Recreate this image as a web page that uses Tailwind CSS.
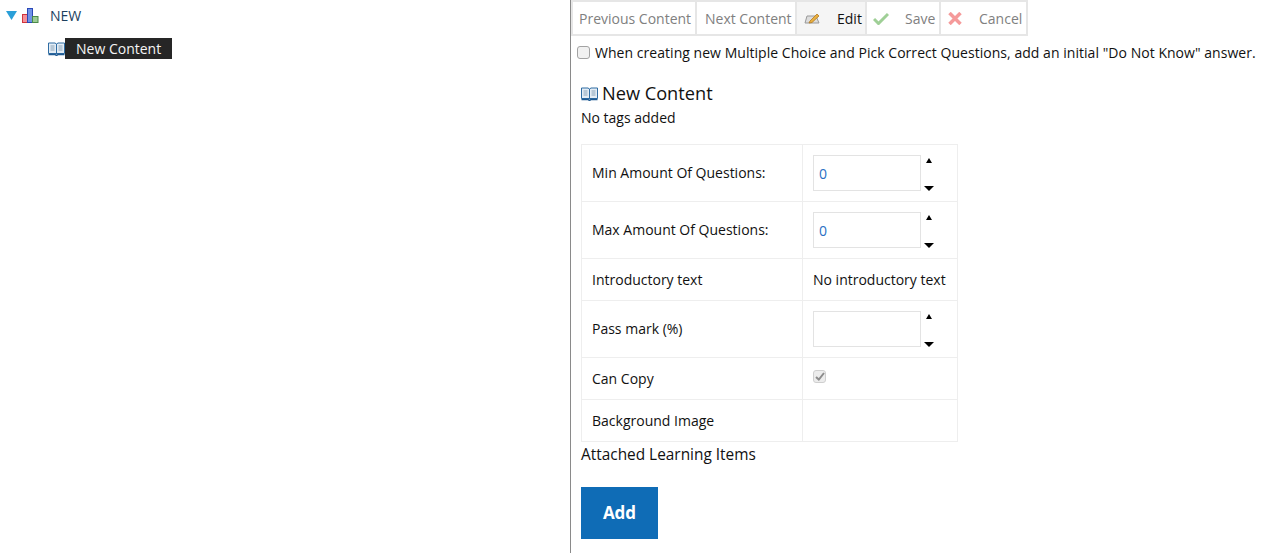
<!DOCTYPE html>
<html lang="en">
<head>
<meta charset="UTF-8">
<title>New Content</title>
<script src="https://cdn.jsdelivr.net/npm/@tailwindcss/browser@4"></script>
</head>
<body class="bg-white">
<div class="flex h-[553px] w-[1276px] overflow-hidden font-['Open_Sans',sans-serif] text-[14px] text-[#111]">

  <!-- tree -->
  <div class="w-[570px] shrink-0">
    <div class="flex h-[31px] items-center pl-[6px]">
      <svg width="11" height="9" viewBox="0 0 11 9" class="mb-[1px]"><path d="M0 0H11L5.500 9Z" fill="#2a9fd8"/></svg>
      <svg width="17" height="15" viewBox="0 0 17 15" class="ml-[5px]">
        <rect x="0.500" y="6.500" width="5" height="8" fill="#f58f98" stroke="#d0343c"/>
        <rect x="5.500" y="0.500" width="5" height="14" fill="#6f92e6" stroke="#2a48b8"/>
        <rect x="10.500" y="8.500" width="5.500" height="6" fill="#9ccb94" stroke="#4a8a48"/>
      </svg>
      <span class="ml-[11px] text-[#1d3f5e]">NEW</span>
    </div>
    <div class="mt-[7px] flex h-[21px] items-center pl-[48px]">
      <svg width="17" height="14" viewBox="0 0 17 14">
        <path d="M0.500 1H7L8.500 2L10 1H16.500V11.500H0.500Z" fill="#e4edf5" stroke="#2f6ca3"/>
        <path d="M0.500 12.500H7L8.500 13.500L10 12.500H16.500" fill="none" stroke="#1f5a92" stroke-width="1.500"/>
        <path d="M8.500 2V12" stroke="#2f6ca3"/>
        <path d="M2.500 4H6.500M2.500 6H6.500M2.500 8H6.500M10.500 4H14.500M10.500 6H14.500M10.500 8H14.500" stroke="#8aa3b8"/>
      </svg>
      <span class="flex h-[21px] w-[107px] items-center bg-[#262626] pl-[11px] text-[#f5f5f5]">New Content</span>
    </div>
  </div>

  <!-- detail -->
  <div class="flex-1 border-l border-[#8a8a8a]">
    <div class="flex h-[36px] text-[#808080]">
      <div class="flex w-[126px] items-center border-2 border-[#e6e6e6] pl-[6px] whitespace-nowrap">Previous Content</div>
      <div class="flex w-[100px] items-center border-y-2 border-r-2 border-[#e6e6e6] pl-[8px] whitespace-nowrap">Next Content</div>
      <div class="flex w-[70px] items-center border-y-2 border-r-2 border-[#e6e6e6] bg-[#f5f5f5] pl-[7px] text-[#111]">
        <svg width="17" height="13" viewBox="0 0 17 13"><path d="M1 11L3 4H12L15 11Z" fill="#ddd" stroke="#999"/><path d="M6 9L13 2L15 4L8 10.500L5 11Z" fill="#e8b040" stroke="#b57a20" stroke-width="0.800"/></svg>
        <span class="ml-[16px]">Edit</span>
      </div>
      <div class="flex w-[74px] items-center border-y-2 border-r-2 border-[#e6e6e6] pl-[6px]">
        <svg width="16" height="13" viewBox="0 0 16 13"><path d="M1 7L5.500 11.500L15 2" fill="none" stroke="#9fcf96" stroke-width="3"/></svg>
        <span class="ml-[16px]">Save</span>
      </div>
      <div class="flex w-[87px] items-center border-y-2 border-r-2 border-[#e6e6e6] pl-[7px]">
        <svg width="14" height="13" viewBox="0 0 14 13"><path d="M1.500 1L12.500 12M12.500 1L1.500 12" fill="none" stroke="#f59a9a" stroke-width="3.500"/></svg>
        <span class="ml-[17px]">Cancel</span>
      </div>
    </div>

    <label class="mt-[8px] flex h-[16px] items-center pl-[6px]">
      <input type="checkbox" class="h-[13px] w-[13px] appearance-none rounded-[3px] border border-[#a3a3a3] bg-[#f1f1f1]">
      <span class="ml-[5px] whitespace-nowrap tracking-[0.04px]">When creating new Multiple Choice and Pick Correct Questions, add an initial "Do Not Know" answer.</span>
    </label>

    <div class="ml-[10px]">
      <div class="mt-[21px] flex h-[26px] items-center">
        <svg width="17" height="14" viewBox="0 0 17 14">
          <path d="M0.500 1H7L8.500 2L10 1H16.500V11.500H0.500Z" fill="#e4edf5" stroke="#2f6ca3"/>
          <path d="M0.500 12.500H7L8.500 13.500L10 12.500H16.500" fill="none" stroke="#1f5a92" stroke-width="1.500"/>
          <path d="M8.500 2V12" stroke="#2f6ca3"/>
          <path d="M2.500 4H6.500M2.500 6H6.500M2.500 8H6.500M10.500 4H14.500M10.500 6H14.500M10.500 8H14.500" stroke="#8aa3b8"/>
        </svg>
        <span class="ml-[4px] text-[18.2px]">New Content</span>
      </div>
      <div class="mt-[1px] h-[20px] leading-[20px]">No tags added</div>

      <table class="mt-[16px] w-[377px] table-fixed border-collapse">
        <tbody>
          <tr class="h-[57px]">
            <td class="w-[221px] border border-[#eeeeee] pb-[2px] pl-[10px]">Min Amount Of Questions:</td>
            <td class="border border-[#eeeeee] pl-[10px]">
              <div class="flex items-start">
                <div class="flex h-[36px] w-[108px] items-center border border-[#e3e3e3] pt-[1px] pl-[5px] text-[#2a6fc4]">0</div>
                <div class="flex h-[36px] w-[16px] flex-col items-center justify-between pt-[3px] pb-0">
                  <span class="h-0 w-0 border-x-[3.5px] border-b-[5px] border-x-transparent border-b-black"></span>
                  <span class="h-0 w-0 border-x-[5px] border-t-[5px] border-x-transparent border-t-black"></span>
                </div>
              </div>
            </td>
          </tr>
          <tr class="h-[57px]">
            <td class="border border-[#eeeeee] pb-[2px] pl-[10px]">Max Amount Of Questions:</td>
            <td class="border border-[#eeeeee] pl-[10px]">
              <div class="flex items-start">
                <div class="flex h-[36px] w-[108px] items-center border border-[#e3e3e3] pt-[1px] pl-[5px] text-[#2a6fc4]">0</div>
                <div class="flex h-[36px] w-[16px] flex-col items-center justify-between pt-[3px] pb-0">
                  <span class="h-0 w-0 border-x-[3.5px] border-b-[5px] border-x-transparent border-b-black"></span>
                  <span class="h-0 w-0 border-x-[5px] border-t-[5px] border-x-transparent border-t-black"></span>
                </div>
              </div>
            </td>
          </tr>
          <tr class="h-[42px]">
            <td class="border border-[#eeeeee] pl-[10px]">Introductory text</td>
            <td class="whitespace-nowrap border border-[#eeeeee] pl-[10px]">No introductory text</td>
          </tr>
          <tr class="h-[57px]">
            <td class="border border-[#eeeeee] pb-[2px] pl-[10px]">Pass mark (%)</td>
            <td class="border border-[#eeeeee] pl-[10px]">
              <div class="flex items-start">
                <div class="h-[36px] w-[108px] border border-[#e3e3e3]"></div>
                <div class="flex h-[36px] w-[16px] flex-col items-center justify-between pt-[3px] pb-0">
                  <span class="h-0 w-0 border-x-[3.5px] border-b-[5px] border-x-transparent border-b-black"></span>
                  <span class="h-0 w-0 border-x-[5px] border-t-[5px] border-x-transparent border-t-black"></span>
                </div>
              </div>
            </td>
          </tr>
          <tr class="h-[42px]">
            <td class="border border-[#eeeeee] pl-[10px]">Can Copy</td>
            <td class="border border-[#eeeeee] pl-[10px]">
              <div class="mb-[5px] flex h-[13px] w-[13px] items-center justify-center rounded-[3px] border border-[#cfcfcf] bg-[#ececec]">
                <svg width="10" height="9" viewBox="0 0 10 9"><path d="M1 5L3.800 7.500L9 1" fill="none" stroke="#8c8c8c" stroke-width="2"/></svg>
              </div>
            </td>
          </tr>
          <tr class="h-[42px]">
            <td class="border border-[#eeeeee] pl-[10px]">Background Image</td>
            <td class="border border-[#eeeeee]"></td>
          </tr>
        </tbody>
      </table>

      <div class="mt-[2px] h-[22px] text-[15.4px] leading-[22px]">Attached Learning Items</div>
      <button class="mt-[21px] h-[52px] w-[77px] bg-[#0f6cb6] text-[17px] font-bold text-white">Add</button>
    </div>
  </div>
</div>
</body>
</html>
